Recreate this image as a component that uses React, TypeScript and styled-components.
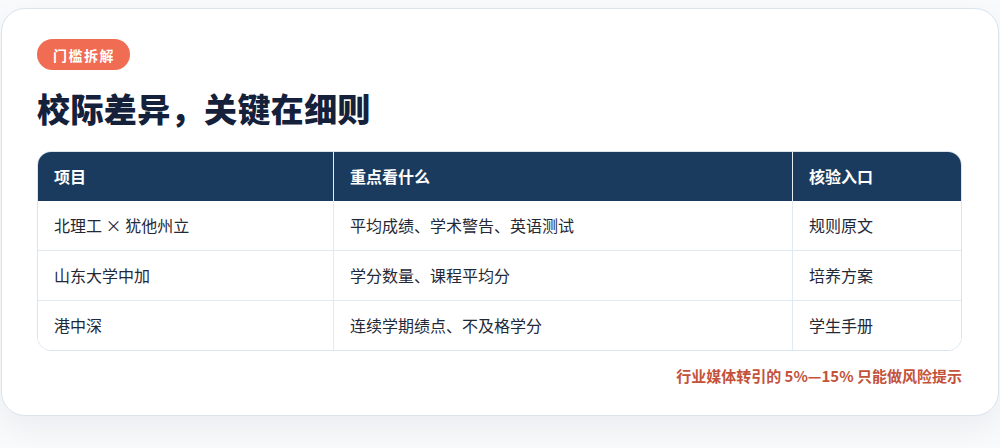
import React from "react";
import styled, { createGlobalStyle } from "styled-components";

const GlobalStyle = createGlobalStyle`
  html, body {
    margin: 0;
    padding: 0;
    background: #f8fafc;
  }
  body {
    font-family: "Noto Sans CJK SC", "Noto Sans", "Liberation Sans", sans-serif;
  }
`;

const Page = styled.div`
  padding: 8px 1px 32px;
`;

const Card = styled.section`
  box-sizing: border-box;
  width: 998px;
  background: #ffffff;
  border: 1px solid #d9e4ef;
  border-radius: 24px;
  padding: 30px 36px 29px 35px;
  box-shadow: 0 12px 32px rgba(15, 23, 42, 0.06);
`;

const Badge = styled.span`
  display: inline-flex;
  align-items: center;
  height: 31px;
  padding: 0 15px 0 16px;
  border-radius: 999px;
  background: #f06c52;
  color: #ffffff;
  font-size: 14px;
  font-weight: 700;
  letter-spacing: 1.5px;
`;

const Title = styled.h1`
  margin: 18px 0 23px;
  font-size: 33px;
  line-height: 40px;
  font-weight: 800;
  color: #15213b;
  letter-spacing: 0.4px;
`;

const Table = styled.div`
  border: 1px solid #d9e4ef;
  border-radius: 14px;
  overflow: hidden;
`;

const Row = styled.div<{ $head?: boolean }>`
  display: grid;
  grid-template-columns: 295px 459px 1fr;
  background: ${(p) => (p.$head ? "#1a3b5e" : "#ffffff")};
  border-top: ${(p) => (p.$head ? "none" : "1px solid #e2eaf1")};
  &:nth-child(2) {
    border-top: none;
  }
`;

const Cell = styled.div<{ $head?: boolean }>`
  padding: 12px 16px 13px;
  font-size: 16px;
  line-height: 24px;
  font-weight: ${(p) => (p.$head ? 700 : 400)};
  color: ${(p) => (p.$head ? "#ffffff" : "#1f2937")};
  border-left: 1px solid ${(p) => (p.$head ? "#e6edf4" : "#e2eaf1")};
  &:first-child {
    border-left: none;
  }
`;

const Note = styled.p`
  margin: 15px 0 0;
  text-align: right;
  font-size: 15px;
  line-height: 20px;
  font-weight: 700;
  color: #c4523b;
`;

const head = ["项目", "重点看什么", "核验入口"];

const rows = [
  ["北理工 × 犹他州立", "平均成绩、学术警告、英语测试", "规则原文"],
  ["山东大学中加", "学分数量、课程平均分", "培养方案"],
  ["港中深", "连续学期绩点、不及格学分", "学生手册"],
];

export default function App() {
  return (
    <>
      <GlobalStyle />
      <Page>
        <Card>
          <Badge>门槛拆解</Badge>
          <Title>校际差异，关键在细则</Title>
          <Table>
            <Row $head>
              {head.map((h) => (
                <Cell $head key={h}>
                  {h}
                </Cell>
              ))}
            </Row>
            {rows.map((r) => (
              <Row key={r[0]}>
                {r.map((c) => (
                  <Cell key={c}>{c}</Cell>
                ))}
              </Row>
            ))}
          </Table>
          <Note>行业媒体转引的 5%—15% 只能做风险提示</Note>
        </Card>
      </Page>
    </>
  );
}
